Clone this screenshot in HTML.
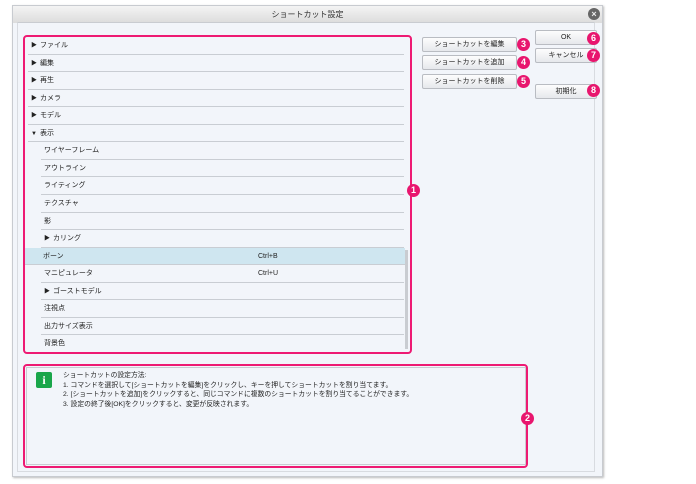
<!DOCTYPE html>
<html><head><meta charset="utf-8"><style>
*{margin:0;padding:0;box-sizing:border-box}
body{width:696px;height:484px;background:#fff;position:relative;overflow:hidden;font-family:"Liberation Sans","Noto Sans CJK JP",sans-serif;font-size:7px;color:#222}
.a{position:absolute}
.dlg{left:12px;top:5px;width:591px;height:472px;background:#f2f5fa;border:1px solid #c8cbd0;box-shadow:1px 1px 2px #bbb}
.title{left:0;top:0;width:589px;height:17px;background:linear-gradient(#f4f4f4,#dcdcdc);text-align:center;line-height:17px;font-size:8px;color:#333}
.row{position:absolute;left:28px;width:376px;height:17.55px;line-height:17px;border-bottom:1px solid #c9cdd3;padding-left:3px}
.btn{position:absolute;height:15px;background:linear-gradient(#fdfdfd,#e6e8ec);border:1px solid #b9bcc2;border-radius:2px;text-align:center;line-height:13px;font-size:7px;color:#222}
.bd{position:absolute;width:13px;height:13px;border-radius:50%;background:#e8166e;color:#fff;font-size:9px;font-weight:bold;text-align:center;line-height:13px}
.tri{font-size:6px;margin-right:3px}
.mg{position:absolute;border:2.5px solid #ee1a73;border-radius:4px}
</style></head><body>
<div class="a dlg">
<div class="a title">ショートカット設定</div>
<div class="a" style="left:575px;top:2px;width:12px;height:12px;border-radius:50%;background:#666;color:#eee;font-size:9px;line-height:12px;text-align:center;font-weight:bold">×</div>
<div class="a" style="left:4px;top:16px;width:578px;height:450px;border:1px solid #d8dbe0;border-top:1px solid #c9ccd1"></div>
</div>
<div class="a" style="left:25px;top:37px;width:384px;height:314px;background:#f2f5fa"></div>
<div class="row" style="top:37px"><span class="tri">▶</span>ファイル</div>
<div class="row" style="top:54.5px"><span class="tri">▶</span>編集</div>
<div class="row" style="top:72px"><span class="tri">▶</span>再生</div>
<div class="row" style="top:89.6px"><span class="tri">▶</span>カメラ</div>
<div class="row" style="top:107.2px"><span class="tri">▶</span>モデル</div>
<div class="row" style="top:124.8px"><span class="tri">▼</span>表示</div>
<div class="row" style="top:142.3px;left:41px;width:363px">ワイヤーフレーム</div>
<div class="row" style="top:159.9px;left:41px;width:363px">アウトライン</div>
<div class="row" style="top:177.4px;left:41px;width:363px">ライティング</div>
<div class="row" style="top:195px;left:41px;width:363px">テクスチャ</div>
<div class="row" style="top:212.5px;left:41px;width:363px">影</div>
<div class="row" style="top:230px;left:41px;width:363px"><span class="tri">▶</span>カリング</div>
<div class="row" style="top:247.6px;left:25px;width:380px;background:#cfe6f0;padding-left:18px">ボーン<span class="a" style="left:233px">Ctrl+B</span></div>
<div class="row" style="top:265.2px;left:41px;width:363px">マニピュレータ<span class="a" style="left:217px">Ctrl+U</span></div>
<div class="row" style="top:282.7px;left:41px;width:363px"><span class="tri">▶</span>ゴーストモデル</div>
<div class="row" style="top:300.3px;left:41px;width:363px">注視点</div>
<div class="row" style="top:317.8px;left:41px;width:363px">出力サイズ表示</div>
<div class="row" style="top:335.4px;left:41px;width:363px;border:none">背景色</div>
<div class="a" style="left:405px;top:250px;width:3px;height:99px;background:#c9ccd1"></div>
<div class="mg" style="left:23px;top:35px;width:389px;height:319px"></div>
<div class="bd" style="left:407px;top:184px">1</div>

<div class="a" style="left:26px;top:367px;width:500px;height:98px;border:1px solid #c9ccd1"></div>
<div class="mg" style="left:23px;top:364px;width:505px;height:104px"></div>
<div class="bd" style="left:521px;top:412px">2</div>
<div class="a" style="left:36px;top:372px;width:16px;height:16px;background:#1aa64a;border-radius:2px;color:#fff;font-weight:bold;font-size:12px;line-height:16px;text-align:center;font-family:'Liberation Serif',serif">i</div>
<div class="a" style="left:63px;top:371px;font-size:6.8px;line-height:9.5px;white-space:nowrap">ショートカットの設定方法:<br>1. コマンドを選択して[ショートカットを編集]をクリックし、キーを押してショートカットを割り当てます。<br>2. [ショートカットを追加]をクリックすると、同じコマンドに複数のショートカットを割り当てることができます。<br>3. 設定の終了後[OK]をクリックすると、変更が反映されます。</div>

<div class="btn" style="left:422px;top:37px;width:95px">ショートカットを編集</div>
<div class="btn" style="left:422px;top:55px;width:95px">ショートカットを追加</div>
<div class="btn" style="left:422px;top:74px;width:95px">ショートカットを削除</div>
<div class="bd" style="left:517px;top:38px">3</div>
<div class="bd" style="left:517px;top:56px">4</div>
<div class="bd" style="left:517px;top:75px">5</div>
<div class="btn" style="left:535px;top:30px;width:62px">OK</div>
<div class="btn" style="left:535px;top:48px;width:62px">キャンセル</div>
<div class="btn" style="left:535px;top:84px;width:62px">初期化</div>
<div class="bd" style="left:587px;top:32px">6</div>
<div class="bd" style="left:587px;top:49px">7</div>
<div class="bd" style="left:587px;top:84px">8</div>
</body></html>
